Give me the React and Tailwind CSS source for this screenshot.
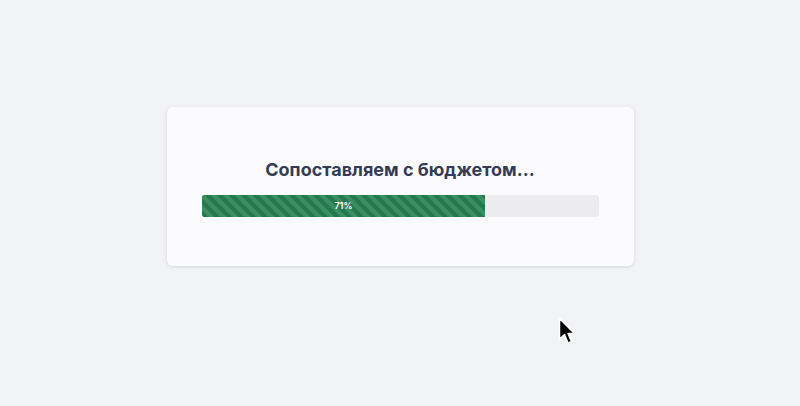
export default function App() {
  const pct = 71.5;
  return (
    <div className="relative min-h-[406px] w-full bg-[#f2f3f7] font-['Inter',sans-serif]">
      <div className="flex justify-center pt-[107px]">
        <div className="w-[467px] h-[159px] rounded-md bg-[#fbfbfd] shadow-[0_1px_4px_rgba(0,0,0,0.12)] px-[35px] pt-[52px]">
          <h1 className="text-center text-[18px] leading-[22px] font-bold text-[#343b53]">
            Сопоставляем с бюджетом...
          </h1>
          <div className="mt-[14px] h-[22px] w-full rounded-[3px] bg-[#ececef] overflow-hidden">
            <div
              className="h-full flex items-center justify-center text-white text-[9px] font-semibold bg-[#247a4e] bg-[repeating-linear-gradient(45deg,#247a4e_0px,#247a4e_4.25px,#3a8e62_4.25px,#3a8e62_8.5px)]"
              style={{ width: `${pct}%` }}
            >
              71%
            </div>
          </div>
        </div>
      </div>
      <svg className="absolute left-[558px] top-[317px]" width="20" height="30" viewBox="0 0 20 30">
        <path d="M1.5 1.5 L1.5 22 L6.5 17.5 L10 26 L13.5 24.5 L10 16.5 L16.5 16.5 Z" fill="#000" stroke="#fff" strokeWidth="1.5" strokeLinejoin="round" />
      </svg>
    </div>
  );
}
